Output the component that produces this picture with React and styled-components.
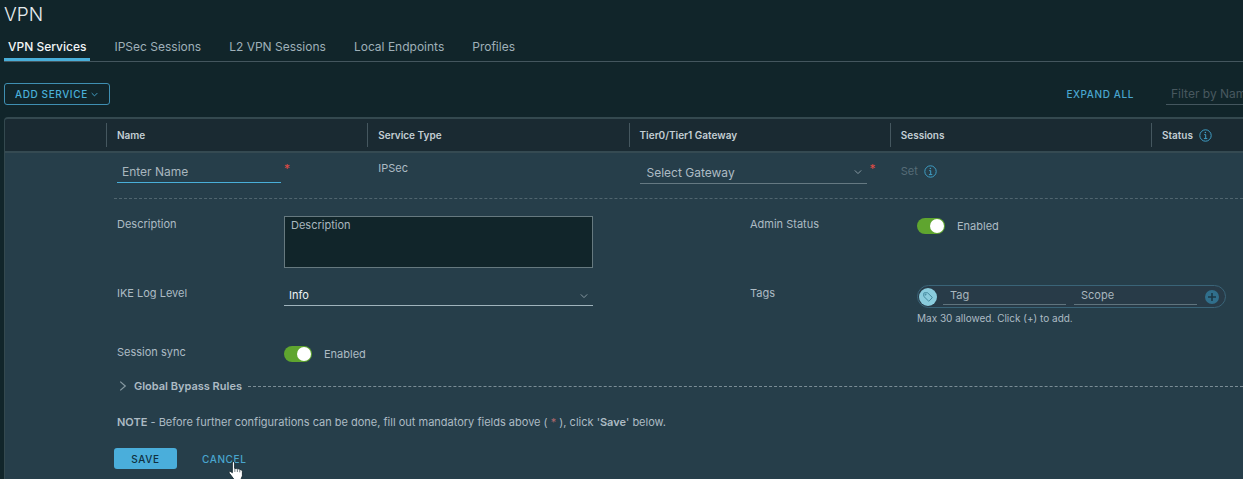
import React from "react";
import styled, { createGlobalStyle, css } from "styled-components";

const GlobalStyle = createGlobalStyle`
  *, *::before, *::after { box-sizing: border-box; }
  html, body { margin: 0; background: #11252a; }
  body, button, input, select, textarea {
    font-family: Inter, "Liberation Sans", sans-serif;
    font-size: 11px;
    color: #adbbc4;
  }
  input, select, textarea { outline: none; border-radius: 0; margin: 0; }
  ::placeholder { color: #a9b6be; opacity: 1; }
`;

const Page = styled.main`
  display: flex;
  flex-direction: column;
  min-height: 100vh;
  padding-left: 4px;
  overflow: hidden;
`;

const Title = styled.h1`
  margin: 0;
  font-size: 19px;
  line-height: 30px;
  font-weight: 300;
  color: #e6ecef;
`;

const Tabs = styled.nav`
  display: flex;
  gap: 20px;
  margin-top: 4px;
  border-bottom: 1px solid #44565e;
`;

const Tab = styled.a`
  padding: 0 4px;
  height: 27px;
  line-height: 26px;
  font-size: 12px;
  text-decoration: none;
  white-space: nowrap;
  color: ${(p) => (p.$active ? "#f2f6f8" : "#9fb0b8")};
  font-weight: ${(p) => (p.$active ? 500 : 400)};
  box-shadow: ${(p) => (p.$active ? "inset 0 -3px 0 #49afd9" : "none")};
`;

const Toolbar = styled.div`
  display: flex;
  align-items: center;
  padding: 21px 0 12px;
`;

const actionText = css`
  font-size: 10px;
  line-height: 20px;
  letter-spacing: 0.06em;
  font-weight: 500;
  text-transform: uppercase;
  white-space: nowrap;
  cursor: pointer;
`;

const OutlineButton = styled.button`
  ${actionText}
  display: flex;
  align-items: center;
  gap: 3px;
  padding: 0 11px 0 10px;
  border: 1px solid #3f8fb2;
  border-radius: 3px;
  background: transparent;
  color: #49afd9;
`;

const LinkButton = styled.button`
  ${actionText}
  padding: 0;
  border: 0;
  background: transparent;
  color: #49a6cf;
`;

const Filter = styled.input`
  width: 77px;
  height: 22px;
  margin-left: 32px;
  padding: 0 0 0 5px;
  border: 0;
  border-bottom: 1px solid #44565e;
  background: transparent;
  font-size: 12px;
  &::placeholder { color: #48585f; }
`;

const Spacer = styled.div`
  flex: 1;
`;

const Frame = styled.section`
  flex: 1;
  border: solid #34494f;
  border-width: 2px 0 0 1px;
  border-top-left-radius: 4px;
  background: #263e4a;
  overflow: hidden;
`;

const Table = styled.table`
  width: 100%;
  table-layout: fixed;
  border-collapse: collapse;
`;

const Col = styled.col`
  width: ${(p) => (p.$width ? `${p.$width}px` : "auto")};
`;

const HeadCell = styled.th`
  padding: 4px 0;
  background: #1a2a32;
  border-bottom: 2px solid #354a52;
  text-align: left;
  font-weight: 600;
`;

const HeadLabel = styled.div`
  display: flex;
  align-items: center;
  gap: 6px;
  height: 24px;
  padding-left: 10px;
  border-left: 1px solid #45575f;
  font-size: 10px;
  white-space: nowrap;
  color: #c3ced4;
`;

const Cell = styled.td`
  height: 46px;
  padding: 8px 0 0 11px;
  vertical-align: top;
  line-height: 14px;
`;

const DetailCell = styled.td`
  padding: 0 0 0 8px;
`;

const Inline = styled.div`
  display: flex;
  align-items: flex-start;
  gap: ${(p) => p.$gap}px;
`;

const NameInput = styled.input`
  flex: 0 1 164px;
  min-width: 0;
  height: 22px;
  padding: 0 5px;
  border: 0;
  border-bottom: 1px solid #49afd9;
  background: transparent;
  font-size: 12px;
`;

const Required = styled.span`
  color: #e04b45;
  font-size: 12px;
  line-height: 16px;
`;

const SelectBox = styled.div`
  position: relative;
  flex: 0 1 ${(p) => p.$width || "100%"};
  min-width: 0;
  svg { position: absolute; right: 5px; top: 7px; pointer-events: none; }
`;

const Select = styled.select`
  display: block;
  width: 100%;
  height: ${(p) => (p.$bright ? 21 : 23)}px;
  padding: 0 20px 0 ${(p) => (p.$bright ? 5 : 7)}px;
  appearance: none;
  border: 0;
  border-bottom: 1px solid ${(p) => (p.$bright ? "#9fb3bc" : "#657982")};
  background: transparent;
  color: ${(p) => (p.$bright ? "#eef3f5" : "#adbbc4")};
  font-size: ${(p) => (p.$bright ? 11 : 12)}px;
`;

const Muted = styled.span`
  color: #566c77;
  line-height: 20px;
`;

const Detail = styled.div`
  border-top: 1px dashed #50656f;
`;

const Form = styled.div`
  display: grid;
  grid-template-columns: 167fr 309fr 157fr 167fr 309fr 17fr;
  row-gap: 17px;
  padding: 17px 0 0 3px;
`;

const Label = styled.label`
  grid-column: ${(p) => p.$col};
  line-height: 16px;
`;

const Field = styled.div`
  grid-column: ${(p) => p.$col};
  min-width: 0;
`;

const TextArea = styled.textarea`
  display: block;
  width: 100%;
  height: 52px;
  padding: 1px 6px;
  border: 1px solid #66797f;
  background: #11252a;
  line-height: 14px;
  resize: none;
`;

const SwitchLabel = styled.label`
  display: flex;
  align-items: center;
  gap: 12px;
  height: 20px;
`;

const Switch = styled.input`
  appearance: none;
  width: 28px;
  height: 16px;
  border-radius: 8px;
  background: #5fa52f;
  display: flex;
  justify-content: flex-end;
  padding: 1px;
  &::before {
    content: "";
    width: 14px;
    height: 14px;
    border-radius: 50%;
    background: #fff;
  }
  &:not(:checked) { background: #566c77; justify-content: flex-start; }
`;

const TagPill = styled.div`
  display: flex;
  align-items: center;
  gap: 8px;
  height: 23px;
  padding: 0 6px 0 1px;
  border: 1px solid #3a6478;
  border-radius: 12px;
  background: #283b48;
`;

const TagBadge = styled.span`
  display: grid;
  place-items: center;
  flex: none;
  width: 18px;
  height: 18px;
  margin-right: -2px;
  border-radius: 50%;
  background: #8accdd;
`;

const TagInput = styled.input`
  flex: 1;
  min-width: 0;
  width: 0;
  height: 16px;
  padding: 0 7px 2px;
  border: 0;
  border-bottom: 1px solid #60747e;
  background: transparent;
`;

const IconButton = styled.button`
  display: grid;
  place-items: center;
  height: 20px;
  padding: 0;
  border: 0;
  background: transparent;
`;

const Hint = styled.p`
  margin: 2px 0 0;
  font-size: 10px;
  line-height: 17px;
`;

const SectionToggle = styled.button`
  display: flex;
  align-items: center;
  width: 100%;
  margin-top: 14px;
  padding: 0 0 0 4px;
  border: 0;
  background: transparent;
  line-height: 16px;
  font-weight: 600;
  white-space: nowrap;
  gap: 6px;
  &::after {
    content: "";
    flex: 1;
    border-top: 1px dashed #7b8d96;
  }
`;

const Note = styled.p`
  margin: 20px 0 0;
  padding-left: 3px;
  line-height: 16px;
  b { font-weight: 600; }
  i { color: #b0686c; font-style: normal; }
`;

const Actions = styled.div`
  display: flex;
  align-items: center;
  gap: 25px;
  margin-top: 18px;
`;

const SaveButton = styled.button`
  ${actionText}
  width: 63px;
  height: 21px;
  padding: 0;
  border: 0;
  border-radius: 3px;
  background: #4aaedb;
  color: #10303f;
`;

const CursorAnchor = styled.span`
  position: relative;
  display: flex;
  svg { position: absolute; left: 26px; top: 12px; pointer-events: none; }
`;

const Chevron = ({ size = 8, color = "#8799a2", right }) => (
  <svg width={size} height={size} viewBox="0 0 8 8" fill="none" stroke={color} strokeWidth="1" aria-hidden="true">
    <path d={right ? "M1.8 0.5 5.8 4 1.8 7.5" : "M0.8 2.4 4 5.6 7.2 2.4"} />
  </svg>
);

const Info = () => (
  <svg width="13" height="13" viewBox="0 0 13 13" fill="none" stroke="#3f9dc4" aria-hidden="true">
    <circle cx="6.5" cy="6.5" r="5.7" />
    <path d="M5.2 5.6h1.5v4M4.9 9.6h3.4" />
    <circle cx="6.4" cy="3.5" r=".75" fill="#3f9dc4" stroke="none" />
  </svg>
);

const TagIcon = () => (
  <svg width="10" height="10" viewBox="0 0 10 10" fill="none" stroke="#3b8196" strokeWidth=".9" strokeLinejoin="round" aria-hidden="true">
    <path d="M.8 1.3Q.8.8 1.3.8H4.6L9.1 5.2Q9.4 5.6 9.1 5.9L6.2 8.9Q5.8 9.2 5.4 8.9L.8 4.4Z" />
    <circle cx="2.7" cy="2.7" r=".45" />
  </svg>
);

const PlusCircle = () => (
  <svg width="14" height="14" viewBox="0 0 14 14" aria-hidden="true">
    <circle cx="7" cy="7" r="7" fill="#306f8c" />
    <path d="M7 3v8M3 7h8" stroke="#1c3947" strokeWidth="1.6" />
  </svg>
);

const HandCursor = () => (
  <svg width="16" height="21" viewBox="0 0 15 20" aria-hidden="true">
    <path
      d="M4 1.8Q4 .6 5 .6T6.2 1.8V7L8 7.2Q8.7 6.6 9.4 7.5 10.5 7 11.3 8.1 13.6 7.9 13.6 10V14.2L12.4 17V19.5H5.2V17L1.3 11.8Q.5 10.5 1.5 10T4 11.2Z"
      fill="#fff" stroke="#172a32" strokeWidth=".9" strokeLinejoin="round"
    />
    <path d="M6.4 7v3.4M8.8 7.5v3M11.1 8.2v2.6" stroke="#3c4b52" strokeWidth=".7" />
  </svg>
);

const tabs = ["VPN Services", "IPSec Sessions", "L2 VPN Sessions", "Local Endpoints", "Profiles"];
const columns = ["Name", "Service Type", "Tier0/Tier1 Gateway", "Sessions", "Status"];

export default function App() {
  return (
    <Page>
      <GlobalStyle />
      <Title>VPN</Title>
      <Tabs>
        {tabs.map((name, i) => (
          <Tab key={name} href="#" $active={i === 0}>{name}</Tab>
        ))}
      </Tabs>
      <Toolbar>
        <OutlineButton>Add Service <Chevron size={7} color="#49afd9" /></OutlineButton>
        <Spacer />
        <LinkButton>Expand All</LinkButton>
        <Filter aria-label="Filter" placeholder="Filter by Name" />
      </Toolbar>
      <Frame>
        <Table>
          <colgroup>
            <Col $width={101} />
            <Col /><Col /><Col /><Col />
            <Col $width={92} />
          </colgroup>
          <thead>
            <tr>
              <HeadCell as="td" />
              {columns.map((name) => (
                <HeadCell key={name} scope="col">
                  <HeadLabel>{name}{name === "Status" && <Info />}</HeadLabel>
                </HeadCell>
              ))}
            </tr>
          </thead>
          <tbody>
            <tr>
              <Cell />
              <Cell>
                <Inline $gap={3}>
                  <NameInput aria-label="Name" placeholder="Enter Name" />
                  <Required>*</Required>
                </Inline>
              </Cell>
              <Cell>IPSec</Cell>
              <Cell>
                <Inline $gap={3}>
                  <SelectBox $width="227px">
                    <Select aria-label="Gateway"><option>Select Gateway</option></Select>
                    <Chevron />
                  </SelectBox>
                  <Required>*</Required>
                </Inline>
              </Cell>
              <Cell>
                <Inline $gap={6}>
                  <Muted>Set</Muted>
                  <IconButton aria-label="Session information"><Info /></IconButton>
                </Inline>
              </Cell>
              <Cell />
            </tr>
            <tr>
              <td />
              <DetailCell colSpan={5}>
                <Detail>
                  <Form>
                    <Label $col={1} htmlFor="description">Description</Label>
                    <Field $col={2}><TextArea id="description" placeholder="Description" /></Field>
                    <Label $col={4} htmlFor="admin">Admin Status</Label>
                    <Field $col={5}>
                      <SwitchLabel><Switch id="admin" type="checkbox" defaultChecked />Enabled</SwitchLabel>
                    </Field>
                    <Label $col={1} htmlFor="ike">IKE Log Level</Label>
                    <Field $col={2}>
                      <SelectBox>
                        <Select id="ike" $bright><option>Info</option></Select>
                        <Chevron />
                      </SelectBox>
                    </Field>
                    <Label $col={4} htmlFor="tag">Tags</Label>
                    <Field $col={5}>
                      <TagPill>
                        <TagBadge><TagIcon /></TagBadge>
                        <TagInput id="tag" placeholder="Tag" />
                        <TagInput aria-label="Scope" placeholder="Scope" />
                        <IconButton aria-label="Add tag"><PlusCircle /></IconButton>
                      </TagPill>
                      <Hint>Max 30 allowed. Click (+) to add.</Hint>
                    </Field>
                    <Label $col={1} htmlFor="sync">Session sync</Label>
                    <Field $col={2}>
                      <SwitchLabel><Switch id="sync" type="checkbox" defaultChecked />Enabled</SwitchLabel>
                    </Field>
                  </Form>
                  <SectionToggle><Chevron size={10} right />Global Bypass Rules</SectionToggle>
                  <Note>
                    <b>NOTE</b> - Before further configurations can be done, fill out mandatory fields above ( <i>*</i> ), click '<b>Save</b>' below.
                  </Note>
                  <Actions>
                    <SaveButton>Save</SaveButton>
                    <CursorAnchor>
                      <LinkButton>Cancel</LinkButton>
                      <HandCursor />
                    </CursorAnchor>
                  </Actions>
                </Detail>
              </DetailCell>
            </tr>
          </tbody>
        </Table>
      </Frame>
    </Page>
  );
}
